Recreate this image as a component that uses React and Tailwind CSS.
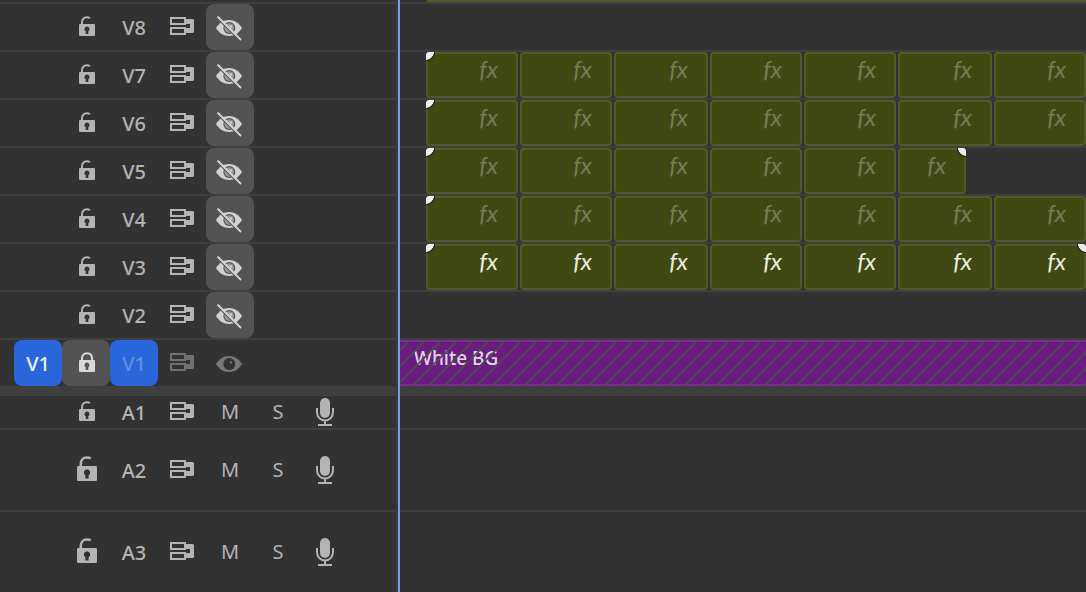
import { useId } from 'react';

const videoTracks = [
  { name: 'V8', clips: [] },
  { name: 'V7', clips: ['a', 'a', 'b', 'a', 'a', 'b', 'a'], start: true },
  { name: 'V6', clips: ['a', 'a', 'b', 'a', 'a', 'b', 'a'], start: true },
  { name: 'V5', clips: ['a', 'a', 'b', 'a', 'a', 'c'], start: true, end: true },
  { name: 'V4', clips: ['a', 'a', 'b', 'a', 'a', 'b', 'a'], start: true },
  { name: 'V3', clips: ['a', 'a', 'b', 'a', 'a', 'b', 'a'], start: true, end: true, active: true },
  { name: 'V2', clips: [] },
];

const audioTracks = [
  { name: 'A1', height: 'h-[34px]' },
  { name: 'A2', height: 'h-[82px]', tall: true },
  { name: 'A3', height: 'h-[82px]', tall: true },
];

const clipWidths = { a: 'w-[92px]', b: 'w-[94px]', c: 'w-[68px]' };

function LockIcon({ open, tall }) {
  return (
    <svg
      className={tall ? 'w-[22px] h-7' : 'w-[18px] h-[22px]'}
      viewBox={tall ? '-1.6 0 17.6 22.4' : '-2 0 18 22'}
      fill="none"
    >
      <path
        d={open ? 'M3 9V6.5C3 3.2 5 1.2 7.7 1.2C9.3 1.2 10.3 1.5 11 2' : 'M3 9V6.5C3 3.2 5 1.2 8 1.2S13 3.2 13 6.5V9'}
        stroke="currentColor"
        strokeWidth="2"
      />
      <path
        fill="currentColor"
        fillRule="evenodd"
        d="M1 8H15Q16 8 16 9V19Q16 20 15 20H1Q0 20 0 19V9Q0 8 1 8ZM8 10.5A2.6 2.6 0 0 0 6.7 15.3V18H9.3V15.3A2.6 2.6 0 0 0 8 10.5Z"
      />
    </svg>
  );
}

function SyncIcon() {
  return (
    <svg className="w-6 h-5" viewBox="0 0 24 20" fill="none">
      <path d="M1 1H15V7H1ZM1 11H15V17H1Z" stroke="currentColor" strokeWidth="2" />
      <path d="M16 2H23L24 3V15L23 16H16V11H20V7H16Z" fill="currentColor" />
    </svg>
  );
}

function EyeIcon({ off }) {
  const id = useId();
  return (
    <svg className="w-7 h-7" viewBox="0 0 28 28" fill="none">
      <mask id={id}>
        <rect width="28" height="28" fill="white" />
        <circle cx="13.3" cy="15" r="6" fill="black" />
        {off && <circle cx="13.3" cy="15" r="4.8" fill="#888" />}
        <circle cx="15" cy="13.5" r="1.2" fill="white" />
        {off && <path d="M0 4L24 28" stroke="black" strokeWidth="1.2" />}
      </mask>
      <path
        d="M0 15C3 10 7.500 7 13 7S23 10 26 15C23 20 18.500 23 13 23S3 20 0 15Z"
        fill="currentColor"
        mask={`url(#${id})`}
      />
      {off && <path d="M1.500 3.500L25 27" stroke="currentColor" strokeWidth="2" />}
    </svg>
  );
}

function MicIcon() {
  return (
    <svg className="w-5 h-7" viewBox="0 0 20 28" fill="none">
      <rect x="4" y="0" width="10" height="20" rx="5" fill="currentColor" />
      <path d="M1 10V14C1 19 4.500 22.500 9 22.500S17 19 17 14V10M9 22V27M2 27H16" stroke="currentColor" strokeWidth="2" />
    </svg>
  );
}

function Cell({ label, className = '', children }) {
  return (
    <button type="button" aria-label={label} className={`w-12 h-full flex items-center justify-center rounded-lg ${className}`}>
      {children}
    </button>
  );
}

function Row({ height = 'h-12', header, children }) {
  return (
    <div className={`flex ${height}`}>
      <div className="w-[396px] shrink-0 flex pl-[14px] border-b-2 border-[#3f3f3f]">{header}</div>
      <div className="w-1 shrink-0" />
      <div className="flex-1 min-w-0 flex border-b-2 border-[#3f3f3f] overflow-hidden">{children}</div>
    </div>
  );
}

function Clip({ width, active, first, last }) {
  return (
    <div className={`relative shrink-0 h-full rounded-[4px] border-2 border-[#525a27] bg-[#404912] ${clipWidths[width]}`}>
      <span className={`block text-right pr-[18px] font-['Lato',sans-serif] italic text-2xl leading-[30px] ${active ? 'text-[#ececdf]' : 'text-[#777c54]'}`}>
        fx
      </span>
      {first && <Fade className="-left-0.5" />}
      {last && <Fade className="-right-0.5 -scale-x-100" />}
    </div>
  );
}

// transition handle in a clip's corner
function Fade({ className }) {
  return (
    <svg className={`absolute -top-0.5 w-[9px] h-[9px] ${className}`} viewBox="0 0 9 9">
      <path d="M0 0H9C9 5 5 9 0 9Z" fill="#1d1f12" />
      <path d="M0 3Q0 0 3 0H8C8 4 4 8 0 8Z" fill="#ececec" />
    </svg>
  );
}

export default function App() {
  return (
    <main className="relative min-h-screen overflow-hidden bg-[#323232] text-[#b4b4b4] text-xl font-['Noto_Sans',sans-serif]">
      <div className="flex h-1">
        <div className="w-[396px] shrink-0 flex border-b-2 border-[#3f3f3f]" />
        <div className="w-1 shrink-0" />
        <div className="flex-1 pl-[26px] border-b-2 border-[#3f3f3f]">
          <div className="h-full rounded-bl-[4px] bg-[#525a27]" />
        </div>
      </div>

      {videoTracks.map((track) => (
        <Row
          key={track.name}
          header={
            <>
              <div className="w-12" />
              <Cell label={`Lock ${track.name}`}><LockIcon open /></Cell>
              <Cell className="pt-0.5 font-medium">{track.name}</Cell>
              <Cell label={`Sync lock ${track.name}`}><SyncIcon /></Cell>
              <Cell label={`Show ${track.name}`} className="bg-[#535353] text-[#d2d2d2]"><EyeIcon off /></Cell>
            </>
          }
        >
          <div className="flex gap-0.5 pl-[26px]">
            {track.clips.map((width, i) => (
              <Clip
                key={i}
                width={width}
                active={track.active}
                first={track.start && i === 0}
                last={track.end && i === track.clips.length - 1}
              />
            ))}
          </div>
        </Row>
      ))}

      {/* V1, locked and targeted */}
      <div className="flex h-[46px]">
        <div className="w-[400px] shrink-0 flex pl-[14px]">
          <Cell className="pt-0.5 font-medium bg-[#2966db] text-[#f0f0f0]">V1</Cell>
          <Cell label="Unlock V1" className="bg-[#535353] text-[#d8d8d8]"><LockIcon /></Cell>
          <Cell className="pt-0.5 font-medium bg-[#2966db] text-[#638fe2]">V1</Cell>
          <Cell label="Sync lock V1" className="text-[#707070]"><SyncIcon /></Cell>
          <Cell label="Hide V1" className="text-[#787878]"><EyeIcon /></Cell>
        </div>
        <div className="relative flex-1 min-w-0 border-y-2 border-[#7c2f92] bg-[#6b1b82]">
          <span className="block pl-[14px] text-[19px] font-medium leading-8 text-[#dfd5e2]">White BG</span>
          <svg className="absolute left-0 -top-0.5 w-full h-[46px]">
            <pattern id="hatch" width="16" height="16" patternUnits="userSpaceOnUse">
              <path d="M-2 12L12 -2M-2 28L28 -2" stroke="#4a4e46" strokeWidth="1.7" />
            </pattern>
            <rect width="100%" height="100%" fill="url(#hatch)" />
          </svg>
        </div>
      </div>

      <div className="h-[10px] bg-[#3f3f3f]" />

      {audioTracks.map((track) => (
        <Row
          key={track.name}
          height={track.height}
          header={
            <>
              <div className="w-12" />
              <Cell label={`Lock ${track.name}`}><LockIcon open tall={track.tall} /></Cell>
              <Cell className="pt-0.5 font-medium">{track.name}</Cell>
              <Cell label={`Sync lock ${track.name}`}><SyncIcon /></Cell>
              <Cell label={`Mute ${track.name}`}>M</Cell>
              <Cell label={`Solo ${track.name}`}>S</Cell>
              <Cell label={`Record ${track.name}`}><MicIcon /></Cell>
            </>
          }
        />
      ))}

      {/* playhead */}
      <div className="absolute inset-y-0 left-[396px] w-1 border-l-2 border-[#3b3b3b] bg-[#69a2f2]" />
    </main>
  );
}
